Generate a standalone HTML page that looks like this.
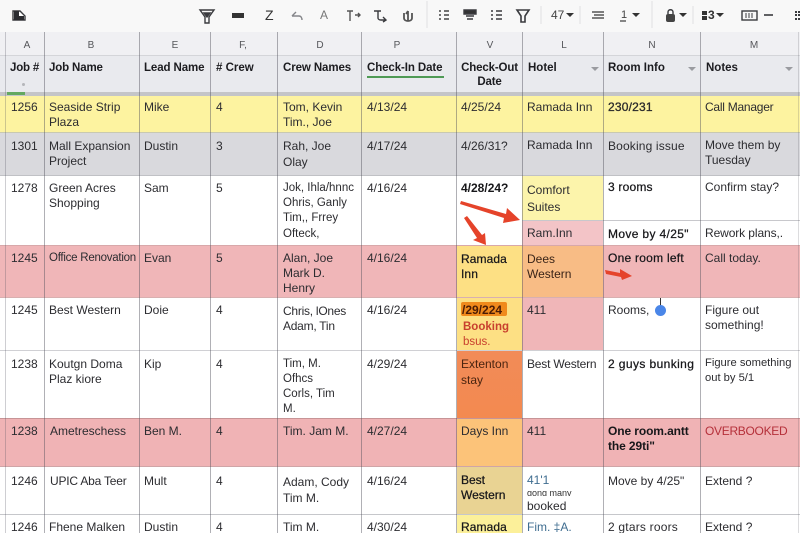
<!DOCTYPE html>
<html>
<head>
<meta charset="utf-8">
<style>
html,body{margin:0;padding:0;width:800px;height:533px;overflow:hidden;background:#fff}
body{position:relative;font-family:"Liberation Sans",sans-serif;font-size:12px;color:#2c2c30}
#p{position:absolute;left:0;top:0;width:800px;height:533px;overflow:hidden;filter:blur(.35px)}
div{position:absolute;box-sizing:border-box}
.t{white-space:nowrap;line-height:14.7px;margin-top:1px}
.b{font-weight:bold;color:#1c1c20;font-size:11.5px}
.m{font-weight:bold;color:#17171a}
.s{-webkit-text-stroke:.25px #17171a;color:#17171a}
.c{font-size:10px;color:#55565a;width:30px;text-align:center;top:39px;line-height:12px}
.v{top:32px;bottom:0;width:1px;background:rgba(80,80,92,.45)}
.h{left:0;width:800px;height:1px;background:#c6c7cb}
.a{width:0;height:0;border-left:4px solid transparent;border-right:4px solid transparent;border-top:4px solid #9a9ba0}
svg{position:absolute;overflow:visible}
</style>
</head>
<body>
<div id="p">
<!-- toolbar -->
<div style="left:0;top:0;width:800px;height:32px;background:#f8f8f8"></div>
<svg style="left:0;top:0" width="800" height="32" fill="none" stroke="#3a3b3f" stroke-width="1.4">
<path d="M13 11h7l5 5v4H13z" fill="#fff"/><path d="M14 11h5v5h5v4H14z" fill="#2b2c30" stroke="none"/>
<path d="M200 10h14l-5 7v6h-4v-6z"/><path d="M204 13h6l-3 4z" fill="#3a3b3f"/>
<rect x="232" y="13" width="12" height="5" fill="#333" stroke="none"/>
<path d="M292 16l4-4M292 16h7c2 0 3 2 3 4" stroke="#85868a"/>
<path d="M347 11h6M350 11v10M355 15h5M358 13l2 2-2 2" stroke="#555"/>
<path d="M374 11h7M378 11v7c0 1 1 2 3 2h4M383 17l3 3-3 2"/>
<path d="M408 11v10M404 13v5c0 2 2 3 4 3s4-1 4-3v-5M408 11l-2 3" stroke-width="1.8" stroke="#555"/>
<path d="M427 1v27M541 6v18M580 6v18M652 1v27M693 6v18" stroke="#e6e6e8"/>
<path d="M444 11h5M444 15h5M444 19h5M439 11h2M439 15h2M439 19h2" stroke="#444"/>
<path d="M464 10h12v4h-12zM466 16h8M467 19h6" fill="#333"/>
<path d="M496 11h6M496 15h6M496 19h6M491 11h2M491 15h2M491 19h2"/>
<path d="M517 10h12l-4 6v6h-4v-6z" stroke-width="1.6"/>
<path d="M592 12h12M594 15h10M592 18h12" stroke="#555"/>
<path d="M620 21h6" stroke="#555"/>
<rect x="666" y="14" width="9" height="8" rx="2" fill="#444" stroke="none"/><path d="M668 14v-2c0-3 5-3 5 0v2"/>
<path d="M702 11h5v4h-5zM702 16h5v4h-5z" fill="#333" stroke="none"/>
<rect x="742" y="11" width="15" height="9"/><path d="M746 13v5M749 13v5M752 13v5" stroke-width="1"/>
<path d="M764 15h9" stroke-width="1.6"/>
<path d="M795 12h5M795 15h5M795 19h5" stroke-width="2" stroke-dasharray="2 1"/>
<path d="M566 13l4 4 4-4z M632 13l4 4 4-4z M679 13l4 4 4-4z M716 13l4 4 4-4z" fill="#333" stroke="none"/>
</svg>
<div class="t" style="left:265px;top:7px;font-size:14px;color:#333">Z</div>
<div class="t" style="left:320px;top:7px;font-size:12px;color:#777">A</div>
<div class="t" style="left:551px;top:7px;font-size:12px;color:#444">47</div>
<div class="t" style="left:621px;top:7px;font-size:11px;color:#444">1</div>
<div class="t" style="left:708px;top:7px;font-size:12px;font-weight:bold;color:#333">3</div>

<!-- column letter row + header -->
<div style="left:0;top:32px;width:800px;height:23px;background:#f0f0f3"></div>
<div style="left:0;top:55px;width:800px;height:37px;background:#e9eaee"></div>
<div style="left:0;top:92px;width:800px;height:4px;background:#c4c5c8"></div>
<div style="left:7px;top:92px;width:18px;height:3px;background:#63a860"></div>
<div style="left:22px;top:83px;width:3px;height:3px;border-radius:50%;background:#b5b6ba"></div>

<!-- rows -->
<div style="left:0;top:96px;width:800px;height:36px;background:#fdf3a0"></div>
<div style="left:0;top:132px;width:800px;height:43px;background:#d9d9dd"></div>
<div style="left:0;top:245px;width:800px;height:52px;background:#f0b6b8"></div>
<div style="left:0;top:418px;width:800px;height:48px;background:#f0b3b5"></div>

<!-- special cells -->
<div style="left:522px;top:175px;width:81px;height:45px;background:#fcf4ab"></div>
<div style="left:522px;top:220px;width:81px;height:25px;background:#f3c4c7"></div>
<div style="left:457px;top:245px;width:65px;height:52px;background:#fde084"></div>
<div style="left:522px;top:245px;width:81px;height:52px;background:#f8bc85"></div>
<div style="left:457px;top:297px;width:65px;height:53px;background:#fde084"></div>
<div style="left:522px;top:297px;width:81px;height:53px;background:#f0b6b8"></div>
<div style="left:457px;top:350px;width:65px;height:68px;background:linear-gradient(#f28b58,#f38a50)"></div>
<div style="left:457px;top:418px;width:65px;height:48px;background:#fcc379"></div>
<div style="left:457px;top:466px;width:65px;height:48px;background:#e9d393"></div>
<div style="left:457px;top:514px;width:65px;height:19px;background:#fcf09a"></div>
<div style="left:461px;top:302px;width:46px;height:14px;background:#f08a1c;border-radius:2px"></div>

<!-- horizontal lines -->
<div class="h" style="top:132px;background:#c9c9b0"></div>
<div class="h" style="top:175px;background:#c0c1c5"></div>
<div class="h" style="top:245px;background:#d8a8aa"></div>
<div class="h" style="top:297px;background:#d8b0b0"></div>
<div class="h" style="top:350px;background:#d0d0d4"></div>
<div class="h" style="top:418px;background:#c79496"></div>
<div class="h" style="top:466px;background:#cfa5a7"></div>
<div class="h" style="top:514px"></div>
<div class="h" style="top:220px;left:522px;width:278px;background:#c8c8cc"></div>
<div class="h" style="top:55px;background:#d4d5d9"></div>

<!-- vertical lines -->
<div class="v" style="left:5px;background:rgba(80,80,92,.28)"></div>
<div class="v" style="left:44px"></div>
<div class="v" style="left:139px"></div>
<div class="v" style="left:210px"></div>
<div class="v" style="left:277px"></div>
<div class="v" style="left:361px"></div>
<div class="v" style="left:456px"></div>
<div class="v" style="left:522px"></div>
<div class="v" style="left:603px"></div>
<div class="v" style="left:700px"></div>
<div class="v" style="left:798px;background:rgba(80,80,92,.2)"></div>

<!-- column letters -->
<div class="t c" style="left:12px">A</div>
<div class="t c" style="left:76px">B</div>
<div class="t c" style="left:160px">E</div>
<div class="t c" style="left:228px">F,</div>
<div class="t c" style="left:305px">D</div>
<div class="t c" style="left:382px">P</div>
<div class="t c" style="left:475px">V</div>
<div class="t c" style="left:549px">L</div>
<div class="t c" style="left:637px">N</div>
<div class="t c" style="left:739px">M</div>

<!-- headers -->
<div class="t b" style="left:10px;top:60px;letter-spacing:-.2px">Job #</div>
<div class="t b" style="left:49px;top:60px;letter-spacing:-.15px">Job Name</div>
<div class="t b" style="left:144px;top:60px;letter-spacing:-.1px">Lead Name</div>
<div class="t b" style="left:216px;top:60px">#&nbsp;Crew</div>
<div class="t b" style="left:283px;top:60px;letter-spacing:-.1px">Crew Names</div>
<div class="t b" style="left:367px;top:60px;letter-spacing:-.1px">Check-In Date</div>
<div style="left:367px;top:76px;width:77px;height:1.5px;background:#4f9a55"></div>
<div class="t b" style="left:457px;top:60px;width:65px;text-align:center;line-height:14px;letter-spacing:-.15px">Check-Out<br>Date</div>
<div class="t b" style="left:528px;top:60px">Hotel</div>
<div class="t b" style="left:608px;top:60px">Room Info</div>
<div class="t b" style="left:706px;top:60px">Notes</div>
<div class="a" style="left:591px;top:67px"></div>
<div class="a" style="left:688px;top:67px"></div>
<div class="a" style="left:785px;top:67px"></div>

<!-- row 1 -->
<div class="t" style="left:11px;top:99px">1256</div>
<div class="t" style="left:49px;top:99px">Seaside Strip<br>Plaza</div>
<div class="t" style="left:144px;top:99px">Mike</div>
<div class="t" style="left:216px;top:99px">4</div>
<div class="t" style="left:283px;top:99px">Tom, Kevin<br>Tim., Joe</div>
<div class="t" style="left:367px;top:99px">4/13/24</div>
<div class="t" style="left:461px;top:99px">4/25/24</div>
<div class="t" style="left:527px;top:99px">Ramada Inn</div>
<div class="t" style="left:608px;top:99px;-webkit-text-stroke:.3px #222;letter-spacing:.2px">230/231</div>
<div class="t" style="left:705px;top:99px;letter-spacing:-.25px">Call Manager</div>

<!-- row 2 -->
<div class="t" style="left:11px;top:138px">1301</div>
<div class="t" style="left:49px;top:138px">Mall Expansion<br>Project</div>
<div class="t" style="left:144px;top:138px">Dustin</div>
<div class="t" style="left:216px;top:138px">3</div>
<div class="t" style="left:283px;top:138px;line-height:15.5px">Rah, Joe<br>Olay</div>
<div class="t" style="left:367px;top:138px">4/17/24</div>
<div class="t" style="left:461px;top:138px">4/26/31?</div>
<div class="t" style="left:527px;top:137px">Ramada Inn</div>
<div class="t" style="left:608px;top:138px;letter-spacing:.15px">Booking issue</div>
<div class="t" style="left:705px;top:137px">Move them by<br>Tuesday</div>

<!-- row 3 -->
<div class="t" style="left:11px;top:180px">1278</div>
<div class="t" style="left:49px;top:180px">Green Acres<br>Shopping</div>
<div class="t" style="left:144px;top:180px">Sam</div>
<div class="t" style="left:216px;top:180px">5</div>
<div class="t" style="left:283px;top:180px;font-size:11.5px;line-height:15.2px">Jok, Ihla/hnnc<br>Ohris, Ganly<br>Tim,, Frrey<br>Ofteck,</div>
<div class="t" style="left:367px;top:180px">4/16/24</div>
<div class="t m" style="left:461px;top:180px">4/28/24?</div>
<div class="t" style="left:527px;top:181px;line-height:17px">Comfort<br>Suites</div>
<div class="t s" style="left:608px;top:179px;letter-spacing:.2px">3 rooms</div>
<div class="t" style="left:705px;top:179px">Confirm stay?</div>
<div class="t" style="left:527px;top:225px">Ram.Inn</div>
<div class="t s" style="left:608px;top:226px;letter-spacing:.35px">Move by 4/25"</div>
<div class="t" style="left:705px;top:225px;letter-spacing:-.1px">Rework plans,.</div>

<!-- row 4 -->
<div class="t" style="left:11px;top:250px">1245</div>
<div class="t" style="left:49px;top:250px;font-size:11.5px;letter-spacing:-.25px">Office Renovation</div>
<div class="t" style="left:144px;top:250px">Evan</div>
<div class="t" style="left:216px;top:250px">5</div>
<div class="t" style="left:283px;top:250px;line-height:15px">Alan, Joe<br>Mark D.<br>Henry</div>
<div class="t" style="left:367px;top:250px">4/16/24</div>
<div class="t s" style="left:461px;top:251px;line-height:15px;letter-spacing:.1px">Ramada<br>Inn</div>
<div class="t" style="left:527px;top:251px;color:#3a2418">Dees<br>Western</div>
<div class="t s" style="left:608px;top:250px;letter-spacing:.25px">One room left</div>
<div class="t" style="left:705px;top:250px">Call today.</div>

<!-- row 5 -->
<div class="t" style="left:11px;top:302px">1245</div>
<div class="t" style="left:49px;top:302px">Best Western</div>
<div class="t" style="left:144px;top:302px">Doie</div>
<div class="t" style="left:216px;top:302px">4</div>
<div class="t" style="left:283px;top:303px;letter-spacing:-.25px;line-height:15px">Chris, lOnes<br>Adam, Tin</div>
<div class="t" style="left:367px;top:302px">4/16/24</div>
<div class="t m" style="left:462px;top:302px;color:#4a1c05">/29/224</div>
<div class="t" style="left:463px;top:319px;font-weight:bold;font-size:11.5px;color:#c8402e;line-height:15px">Booking<br><span style="font-weight:normal">bsus.</span></div>
<div class="t" style="left:527px;top:302px">411</div>
<div class="t" style="left:608px;top:302px">Rooms,</div>
<div class="t" style="left:705px;top:302px">Figure out<br>something!</div>
<div style="left:660px;top:298px;width:1px;height:8px;background:#333"></div>
<div style="left:655px;top:305px;width:11px;height:11px;border-radius:50%;background:#4a86e8"></div>

<!-- row 6 -->
<div class="t" style="left:11px;top:356px">1238</div>
<div class="t" style="left:49px;top:356px">Koutgn Doma<br>Plaz kiore</div>
<div class="t" style="left:144px;top:356px">Kip</div>
<div class="t" style="left:216px;top:356px">4</div>
<div class="t" style="left:283px;top:356px;font-size:11.5px;line-height:15px">Tim, M.<br>Ofhcs<br>Corls, Tim<br>M.</div>
<div class="t" style="left:367px;top:356px">4/29/24</div>
<div class="t" style="left:461px;top:355px;color:#4a2410;line-height:16px">Extenton<br>stay</div>
<div class="t" style="left:527px;top:356px;letter-spacing:-.2px">Best Western</div>
<div class="t s" style="left:608px;top:356px;letter-spacing:.4px">2 guys bunking</div>
<div class="t" style="left:705px;top:355px;font-size:11.2px">Figure something<br>out by 5/1</div>

<!-- row 7 -->
<div class="t" style="left:11px;top:423px">1238</div>
<div class="t" style="left:50px;top:423px">Ametreschess</div>
<div class="t" style="left:144px;top:423px">Ben M.</div>
<div class="t" style="left:216px;top:423px">4</div>
<div class="t" style="left:283px;top:423px">Tim. Jam M.</div>
<div class="t" style="left:367px;top:423px">4/27/24</div>
<div class="t" style="left:461px;top:423px">Days Inn</div>
<div class="t" style="left:527px;top:423px">411</div>
<div class="t m" style="left:608px;top:423px;letter-spacing:-.1px">One room.antt<br>the 29ti"</div>
<div class="t" style="left:705px;top:423px;color:#b5303a;letter-spacing:-.3px">OVERBOOKED</div>

<!-- row 8 -->
<div class="t" style="left:11px;top:473px">1246</div>
<div class="t" style="left:50px;top:473px;letter-spacing:-.2px">UPIC Aba Teer</div>
<div class="t" style="left:144px;top:473px">Mult</div>
<div class="t" style="left:216px;top:473px">4</div>
<div class="t" style="left:283px;top:473px;line-height:16px">Adam, Cody<br>Tim M.</div>
<div class="t" style="left:367px;top:473px">4/16/24</div>
<div class="t s" style="left:461px;top:472px">Best<br>Western</div>
<div class="t" style="left:527px;top:472px;color:#3f6d90">41'1</div>
<div class="t" style="left:527px;top:488px;font-size:9px;line-height:8px;height:7px;overflow:hidden;color:#333">gong many</div>
<div class="t" style="left:527px;top:498px">booked</div>
<div class="t" style="left:608px;top:473px">Move by 4/25"</div>
<div class="t" style="left:705px;top:473px">Extend ?</div>

<!-- row 9 -->
<div class="t" style="left:11px;top:519px">1246</div>
<div class="t" style="left:49px;top:519px">Fhene Malken</div>
<div class="t" style="left:144px;top:519px">Dustin</div>
<div class="t" style="left:216px;top:519px">4</div>
<div class="t" style="left:283px;top:519px">Tim M.</div>
<div class="t" style="left:367px;top:519px">4/30/24</div>
<div class="t s" style="left:461px;top:519px;letter-spacing:.1px">Ramada</div>
<div class="t" style="left:527px;top:519px;color:#3f6d90">Fim. ‡A.</div>
<div class="t" style="left:608px;top:519px;letter-spacing:.2px">2 gtars roors</div>
<div class="t" style="left:705px;top:519px">Extend ?</div>

<!-- arrows -->
<svg style="left:0;top:0" width="800" height="533">
<path d="M461 201L506 214L507 208L520 220L503 223L504 218L460 204Z" fill="#e5432a"/>
<path d="M467 216L482 235L485 233L486 245L473 240L477 238L464 218Z" fill="#e5432a"/>
<path d="M605 270L620 273L620 269L632 276L622 280L621 277L606 274Z" fill="#e5432a"/>
</svg>
</div>
</body>
</html>
